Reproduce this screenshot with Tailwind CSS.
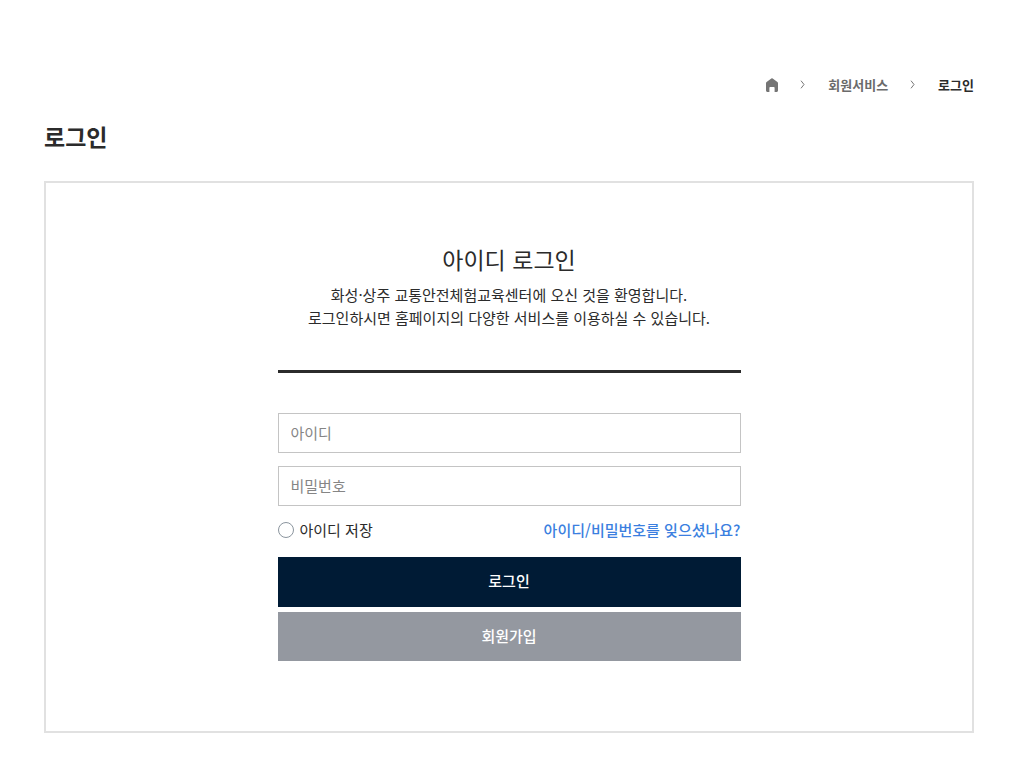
<!DOCTYPE html>
<html lang="ko">
<head>
  <meta charset="UTF-8">
  <meta name="viewport" content="width=device-width, initial-scale=1.0">
  <script src="https://cdn.jsdelivr.net/npm/@tailwindcss/browser@4"></script>
  <title>로그인</title>
</head>
<body class="bg-white text-[#2b2b2b] text-[15px] leading-[23px] font-['Noto_Sans_CJK_KR',sans-serif]">
  <div class="pt-[73px] pb-10 pl-11 pr-10">
    <!-- 현재 위치 -->
    <nav aria-label="현재 위치" class="flex justify-end">
      <ol class="flex items-center text-[13px] font-bold text-[#6b6b6b]">
        <li>
          <a href="#" aria-label="홈" class="block pt-px">
            <svg class="w-3 h-[14px]" viewBox="0 0 12 14" fill="#757575" aria-hidden="true">
              <path d="M5.3 .4a1.2 1.2 0 0 1 1.4 0L11.4 4q.6.5.6 1.2v7.400q0 1.400-1.200 1.400H8.600V9.800q0-.8-.8-.8H4.200q-.8 0-.8.8V14H1.200Q0 14 0 12.600V5.200Q0 4.500.6 4Z"/>
            </svg>
          </a>
        </li>
        <li class="px-[22px]" aria-hidden="true">
          <svg class="w-[6px] h-[9px]" viewBox="0 0 6 9" fill="none" stroke="#757575"><path d="M1 .7l3 3.800L1 8.300"/></svg>
        </li>
        <li><a href="#">회원서비스</a></li>
        <li class="px-[22px]" aria-hidden="true">
          <svg class="w-[6px] h-[9px]" viewBox="0 0 6 9" fill="none" stroke="#757575"><path d="M1 .7l3 3.800L1 8.300"/></svg>
        </li>
        <li><a href="#" aria-current="page" class="text-[#2b2b2b]">로그인</a></li>
      </ol>
    </nav>

    <h1 class="mt-6 text-[23px] leading-8 font-bold">로그인</h1>

    <!-- 로그인 영역 -->
    <main class="mt-[29px] border-2 border-[#e1e1e1] pt-[60px] pb-[70px]">
      <form class="w-1/2 mx-auto">
        <div class="border-b-3 border-[#2b2b2b] pb-[41px] text-center whitespace-nowrap">
          <h2 class="mb-2 text-[23px] leading-8">아이디 로그인</h2>
          <p>화성·상주 교통안전체험교육센터에 오신 것을 환영합니다.<br>로그인하시면 홈페이지의 다양한 서비스를 이용하실 수 있습니다.</p>
        </div>

        <div class="mt-10 flex flex-col gap-[13px]">
          <input type="text" aria-label="아이디" placeholder="아이디" class="w-full h-10 border border-[#c4c4c4] px-3 pb-0.5 placeholder:text-[#858585]">
          <input type="password" aria-label="비밀번호" placeholder="비밀번호" class="w-full h-10 border border-[#c4c4c4] px-3 pb-0.5 placeholder:text-[#858585]">
        </div>

        <div class="mt-3 flex items-center justify-between">
          <label class="flex items-center gap-[6px]">
            <input type="checkbox" class="appearance-none size-4 rounded-full border border-[#8b959e] checked:bg-[#001b35]">
            아이디 저장
          </label>
          <a href="#" class="text-[#3b7fe0] font-medium">아이디/비밀번호를 잊으셨나요?</a>
        </div>

        <div class="mt-4 flex flex-col gap-[5px] font-medium text-white">
          <button type="submit" class="h-[50px] pb-[3px] bg-[#001b35]">로그인</button>
          <button type="button" class="h-[49px] pb-[3px] bg-[#9498a0]">회원가입</button>
        </div>
      </form>
    </main>
  </div>
</body>
</html>
